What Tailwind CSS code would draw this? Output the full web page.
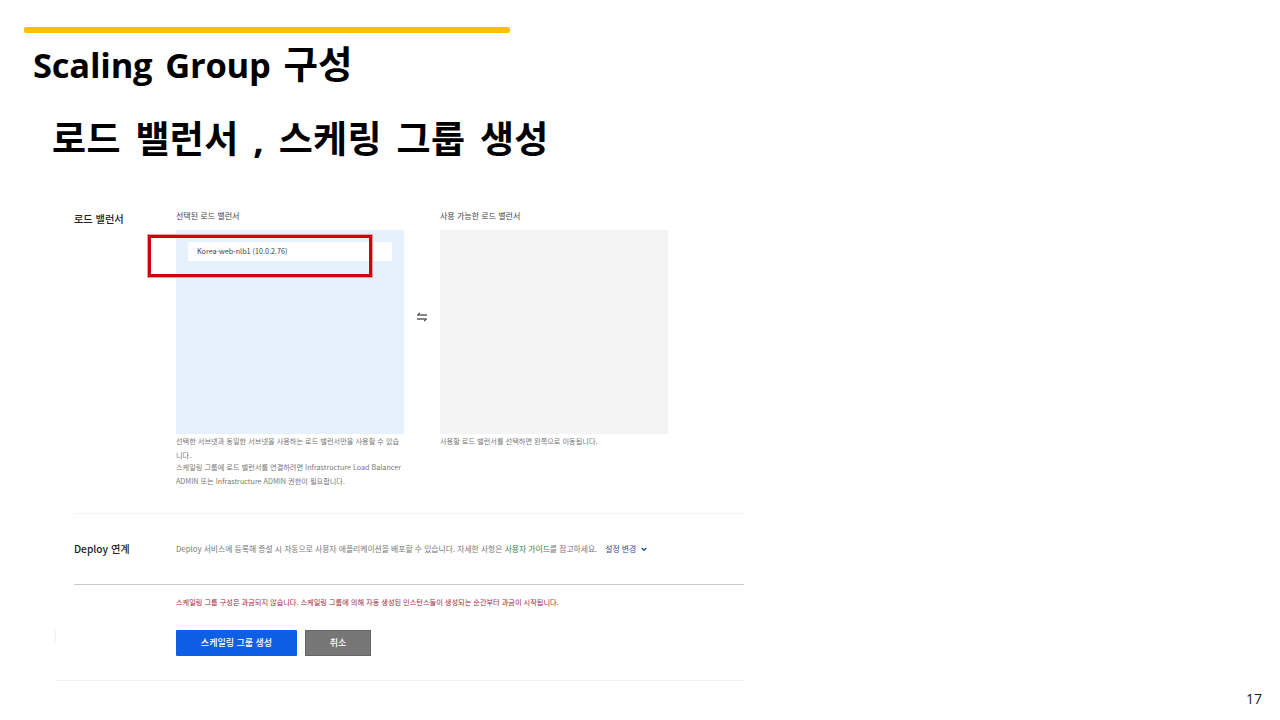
<!DOCTYPE html>
<html lang="ko">
<head>
  <meta charset="UTF-8">
  <title>Scaling Group 구성</title>
  <script src="https://cdn.jsdelivr.net/npm/@tailwindcss/browser@4"></script>
</head>
<body class="relative w-[1280px] h-[720px] overflow-hidden bg-white text-black font-['Open_Sans','Noto_Sans_CJK_KR',sans-serif]">

  <!-- Slide header -->
  <div class="ml-[24px] pt-[27px]">
    <div class="w-[486px] h-[6px] rounded-[2px] bg-[#ffc000]"></div>
    <h1 class="ml-[9px] mt-[5px] h-[52px] text-[34.500px] leading-[52px] font-bold tracking-[-0.2px] [word-spacing:4px] whitespace-nowrap">Scaling Group <span class="text-[37.500px] tracking-normal">구성</span></h1>
    <h2 class="ml-[28px] mt-[26px] h-[46px] text-[37px] leading-[46px] font-bold tracking-[0.4px] [word-spacing:4.500px] whitespace-nowrap">로드 밸런서 , 스케링 그룹 생성</h2>
  </div>

  <!-- Console capture -->
  <div class="ml-[74px] mt-[48px] w-[670px] font-['Noto_Sans_CJK_KR','Open_Sans',sans-serif]">
    <section class="flex h-[304px] border-b border-[#f3f3f3]">
      <div class="w-[102px] pt-[1px] text-[10.200px] leading-[16px] font-medium text-[#222]">로드 밸런서</div>
      <div class="w-[228px]">
        <p class="h-[20px] text-[8px] leading-[12px] text-[#444]">선택된 로드 밸런서</p>
        <div class="h-[204px] bg-[#e7f0fd] px-[12px] pt-[12px]">
          <div class="h-[19px] bg-white pl-[9px] text-[7.200px] leading-[18px] text-[#444]">Korea-web-nlb1 (10.0.2.76)</div>
        </div>
        <p class="text-[7.200px] leading-[14px] text-[#777]">선택한 서브넷과 동일한 서브넷을 사용하는 로드 밸런서만을 사용할 수 있습니다.</p>
        <p class="-mt-[2px] text-[7.200px] leading-[14px] text-[#777]">스케일링 그룹에 로드 밸런서를 연결하려면 Infrastructure Load Balancer ADMIN 또는 Infrastructure ADMIN 권한이 필요합니다.</p>
      </div>
      <div class="w-[36px] pt-[102px] flex justify-center">
        <svg width="12" height="10" viewBox="0 0 12 10" fill="none" stroke="#111" stroke-width="1"><path d="M11 3H1.500L4 .8"/><path d="M1 7h9.500L8 9.200"/></svg>
      </div>
      <div class="w-[228px]">
        <p class="h-[20px] text-[8px] leading-[12px] text-[#444]">사용 가능한 로드 밸런서</p>
        <div class="h-[204px] bg-[#f4f4f4]"></div>
        <p class="text-[7.200px] leading-[14px] text-[#777]">사용할 로드 밸런서를 선택하면 왼쪽으로 이동됩니다.</p>
      </div>
    </section>

    <section class="flex items-center h-[71px] border-b border-[#c9c9c9]">
      <div class="w-[102px] text-[10.200px] font-medium text-[#222]">Deploy 연계</div>
      <p class="text-[7.800px] text-[#777] whitespace-nowrap">Deploy 서비스에 등록해 증설 시 자동으로 사용자 애플리케이션을 배포할 수 있습니다. 자세한 사항은 <span class="text-[#2e7d4f]">사용자 가이드</span>를 참고하세요.</p>
      <span class="ml-[8px] text-[7.800px] text-[#1f4e8c]">설정 변경</span>
      <svg class="ml-[5px]" width="6" height="5" viewBox="0 0 6 5" fill="none" stroke="#1f4e8c" stroke-width="1.300"><path d="M.7 1l2.300 2.300L5.300 1"/></svg>
    </section>

    <p class="ml-[102px] mt-[11px] h-[34px] text-[7.200px] leading-[12px] text-[#a0263a]">스케일링 그룹 구성은 과금되지 않습니다. 스케일링 그룹에 의해 자동 생성된 인스턴스들이 생성되는 순간부터 과금이 시작됩니다.</p>

    <div class="ml-[102px] flex gap-[8px]">
      <button class="w-[121px] h-[26px] rounded-[1px] bg-[#0f5fe6] text-[9px] font-medium text-white">스케일링 그룹 생성</button>
      <button class="w-[66px] h-[26px] border border-[#666] bg-[#777] text-[9px] font-medium text-white">취소</button>
    </div>

    <div class="-ml-[18px] mt-[24px] h-px w-[688px] bg-[#f3f3f3]"></div>
  </div>

  <!-- Annotation and page number -->
  <div class="absolute left-[148px] top-[235px] w-[224px] h-[42px] border-[3px] border-[#d0000d] shadow-[0_0_0_1px_#ee9aa0]"></div>
  <div class="absolute left-[55px] top-[630px] w-px h-[12px] bg-[#eee]"></div>
  <div class="absolute left-[1246px] top-[689px] text-[14px] leading-[20px] text-[#222]">17</div>
</body>
</html>
